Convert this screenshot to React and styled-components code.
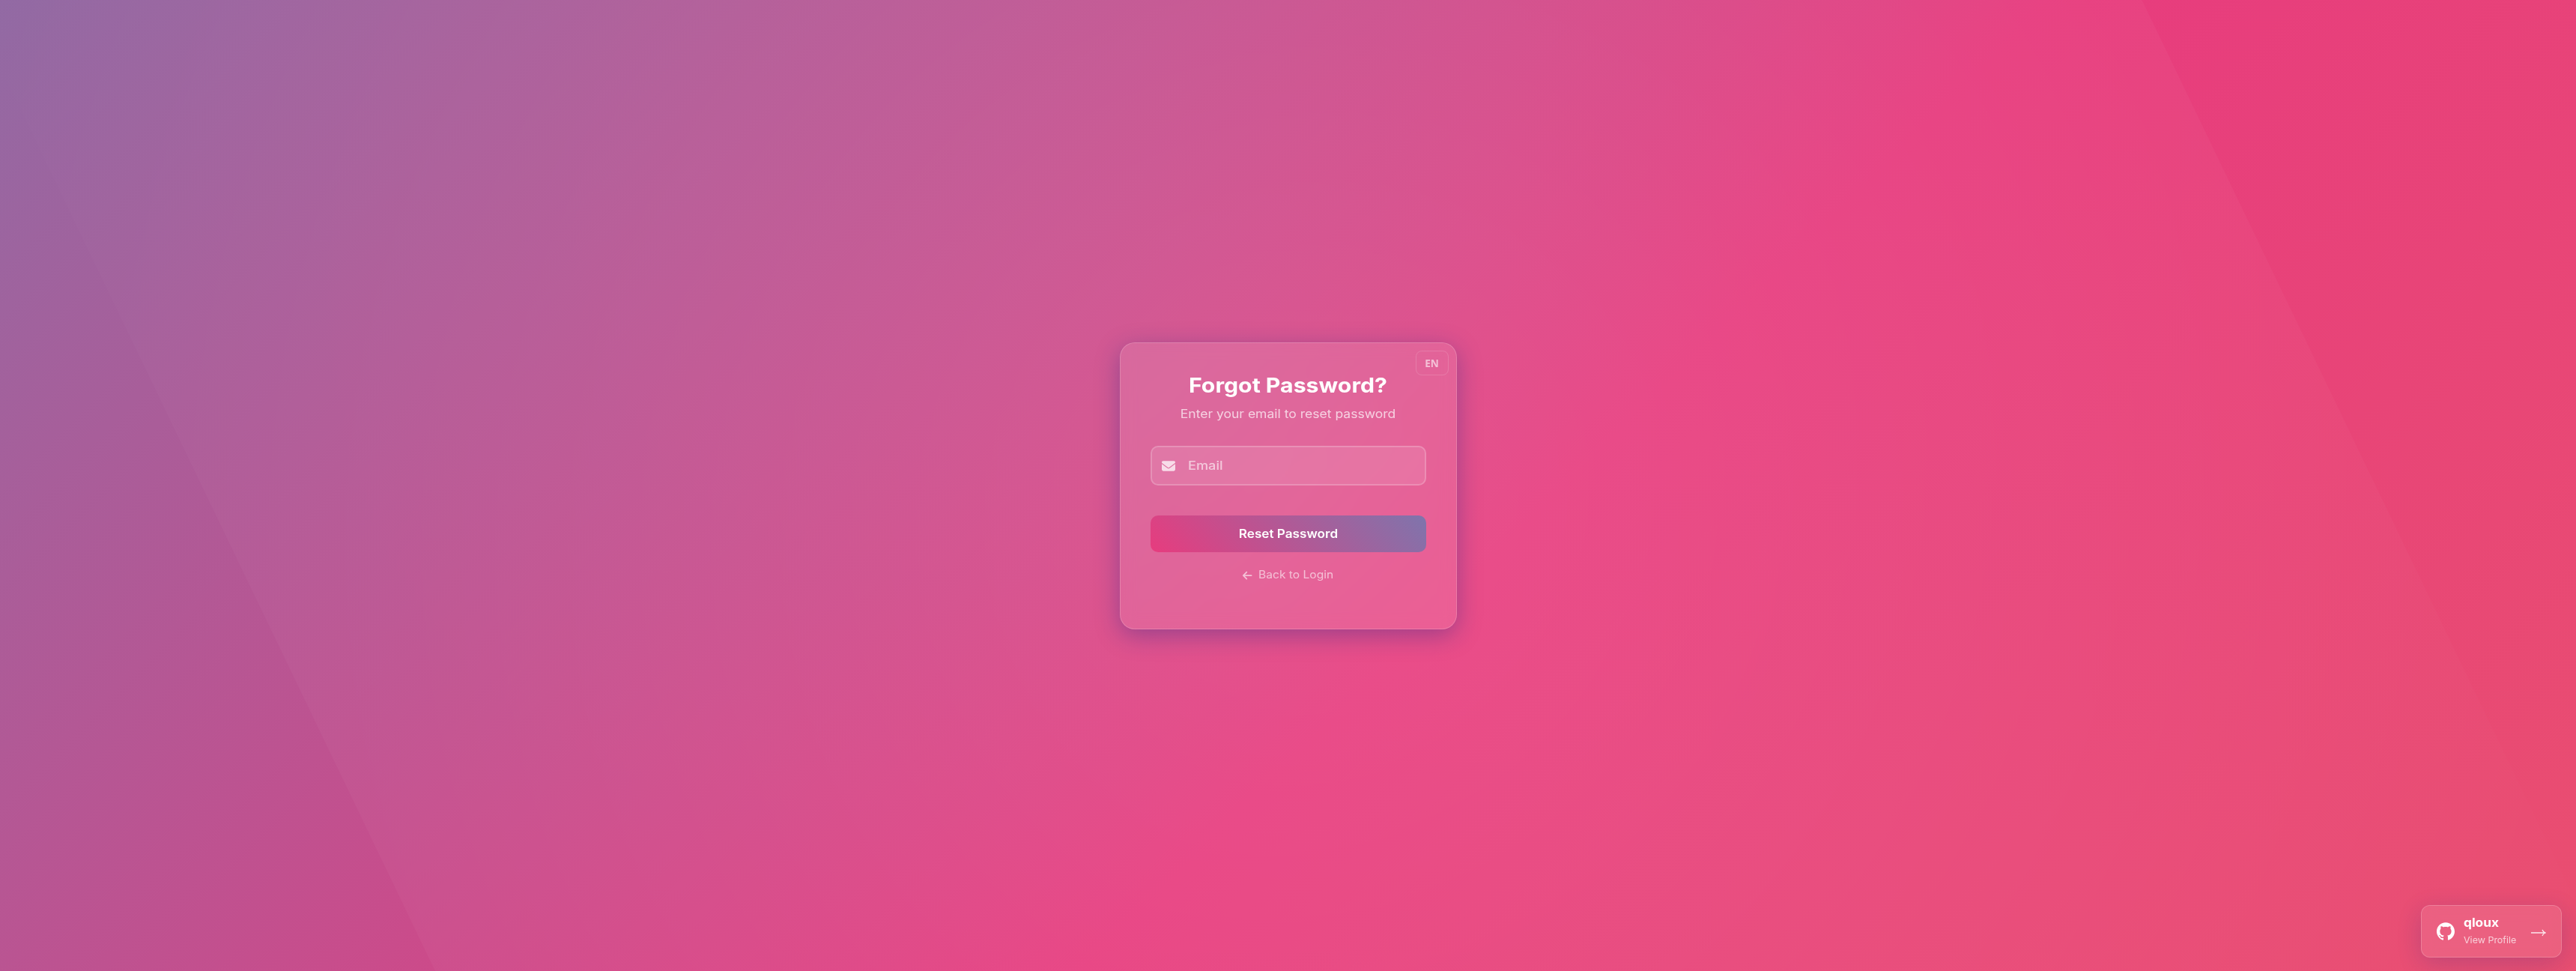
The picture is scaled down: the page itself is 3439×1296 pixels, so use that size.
import React from "react";
import styled, { createGlobalStyle } from "styled-components";
import { FaEnvelope, FaArrowLeft } from "react-icons/fa6";
import { SiGithub } from "react-icons/si";

const GlobalStyle = createGlobalStyle`
  *, *::before, *::after { box-sizing: border-box; }
  body {
    margin: 0;
    overflow: hidden;
    font-family: Inter, "Open Sans", sans-serif;
    color: #fff;
  }
`;

const Page = styled.main`
  position: relative;
  display: flex;
  align-items: center;
  justify-content: center;
  height: 100vh;
  overflow: hidden;
  background: linear-gradient(-45deg, #ee7752, #e73c7e, #23a6d5, #23d5ab);
  background-size: 400% 400%;
  background-position: 77% 50%;

  &::before {
    content: "";
    position: absolute;
    top: -50.9%;
    left: -50.9%;
    width: 201.8%;
    height: 201.8%;
    background: radial-gradient(circle, rgba(255, 255, 255, 0.1) 0%, transparent 50%);
    transform: rotate(64.3deg);
  }
`;

const Card = styled.section`
  position: relative;
  width: 450px;
  height: 383px;
  padding: 39px 40px 40px;
  top: 0.5px;
  border: 1px solid rgba(255, 255, 255, 0.18);
  border-radius: 20px;
  background: rgba(255, 255, 255, 0.1);
  backdrop-filter: blur(10px);
  box-shadow: 0 8px 32px 0 rgba(31, 38, 135, 0.37);
`;

const Language = styled.button`
  position: absolute;
  top: 10px;
  right: 10px;
  width: 44px;
  height: 33px;
  padding: 0;
  border: 1px solid rgba(255, 255, 255, 0.15);
  border-radius: 8px;
  background: transparent;
  color: rgba(255, 255, 255, 0.6);
  font-family: "Noto Sans", "Open Sans", sans-serif;
  font-size: 13.6px;
  line-height: 31px;
  font-weight: 700;
`;

/* Widens the letterforms horizontally */
const Wide = styled.span`
  display: inline-block;
  transform: scaleX(${(p) => p.$by});
  transform-origin: ${(p) => p.$origin || "center"};
  white-space: nowrap;
`;

const Title = styled.h1`
  margin: 0;
  font-size: 27.5px;
  line-height: 34px;
  font-weight: 700;
  text-align: center;
`;

const Subtitle = styled.p`
  margin: 12px 0 0;
  font-size: 15.8px;
  line-height: 20px;
  text-align: center;
  color: rgba(255, 255, 255, 0.7);
`;

const Field = styled.label`
  display: flex;
  align-items: center;
  gap: 17px;
  height: 53px;
  margin-top: 32px;
  padding: 0 13px;
  border: 2px solid rgba(255, 255, 255, 0.2);
  border-radius: 10px;
  background: rgba(255, 255, 255, 0.1);
  color: rgba(255, 255, 255, 0.75);
`;

const Input = styled.input`
  flex: 1;
  min-width: 0;
  padding: 0;
  border: 0;
  outline: 0;
  background: transparent;
  color: #fff;
  font-family: Inter, sans-serif;
  font-size: 15.8px;
  line-height: 20px;
  font-weight: 500;
  transform: scaleX(1.15);
  transform-origin: left;

  &::placeholder {
    color: rgba(255, 255, 255, 0.6);
    opacity: 1;
  }
`;

const Submit = styled.button`
  display: block;
  width: 100%;
  height: 49px;
  margin-top: 40px;
  padding: 0;
  border: 0;
  border-radius: 10px;
  background: linear-gradient(45deg, #e73c7e, #23a6d5);
  background-size: 200% auto;
  color: #fff;
  font-family: Inter, sans-serif;
  font-size: 15.8px;
  line-height: 20px;
  font-weight: 600;
`;

const BackLink = styled.a`
  display: flex;
  align-items: center;
  gap: 8px;
  margin: 21px 0 0 122px;
  color: rgba(255, 255, 255, 0.6);
  font-size: 14.2px;
  line-height: 18px;

  svg {
    position: relative;
    top: 1px;
  }
`;

const Profile = styled.a`
  position: fixed;
  right: 19px;
  bottom: 18px;
  display: flex;
  align-items: center;
  width: 188px;
  height: 70px;
  padding: 0 20px;
  border: 1px solid rgba(255, 255, 255, 0.2);
  border-radius: 12px;
  background: rgba(255, 255, 255, 0.1);
  backdrop-filter: blur(10px);
  box-shadow: 0 8px 32px rgba(31, 38, 135, 0.2);
`;

const ProfileText = styled.span`
  display: flex;
  flex-direction: column;
  align-items: flex-start;
  flex: 1;
  margin-left: 12px;
`;

const Handle = styled.strong`
  font-size: 16px;
  line-height: 23px;
  font-weight: 700;
`;

const Hint = styled.span`
  padding-top: 1px;
  font-size: 12px;
  line-height: 22px;
  color: rgba(255, 255, 255, 0.7);
`;

const Arrow = styled.svg`
  display: block;
  margin-top: 4px;
`;

export default function App() {
  return (
    <>
      <GlobalStyle />
      <Page>
        <Card>
          <Language>EN</Language>
          <Title>
            <Wide $by={1.1}>Forgot Password?</Wide>
          </Title>
          <Subtitle>
            <Wide $by={1.11}>Enter your email to reset password</Wide>
          </Subtitle>
          <Field>
            <FaEnvelope size={18} />
            <Input type="email" placeholder="Email" />
          </Field>
          <Submit>
            <Wide $by={1.085}>Reset Password</Wide>
          </Submit>
          <BackLink>
            <FaArrowLeft size={14.4} />
            <Wide $by={1.1} $origin="left">Back to Login</Wide>
          </BackLink>
        </Card>
        <Profile>
          <SiGithub size={24} />
          <ProfileText>
            <Handle>
              <Wide $by={1.08} $origin="left">qloux</Wide>
            </Handle>
            <Hint>
              <Wide $by={1.04} $origin="left">View Profile</Wide>
            </Hint>
          </ProfileText>
          <Arrow width="20" height="10" viewBox="0 0 20 10" fill="none" stroke="rgba(255,255,255,0.85)" strokeWidth="1.3">
            <path d="M0 5H19M15 1Q16 4 19.2 5Q16 6 15 9" />
          </Arrow>
        </Profile>
      </Page>
    </>
  );
}
